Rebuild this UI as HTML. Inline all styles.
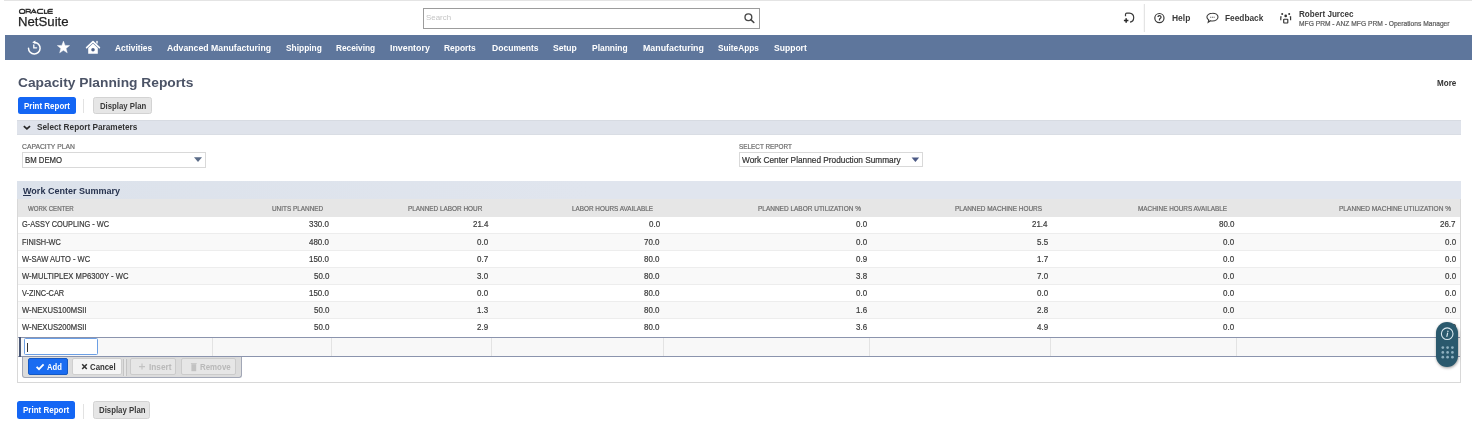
<!DOCTYPE html>
<html><head><meta charset="utf-8">
<style>
html,body{margin:0;padding:0;width:1472px;height:432px;overflow:hidden;background:#fff;position:relative;font-family:"Liberation Sans",sans-serif;}
.a{position:absolute;box-sizing:border-box;}
.t{position:absolute;white-space:nowrap;transform-origin:0 0;font-family:"Liberation Sans",sans-serif;}
.r{font-size:8.4px;line-height:8.4px;color:#3a3a3a;-webkit-text-stroke:0.2px #3a3a3a;}
svg{position:absolute;overflow:visible;}
#w{position:absolute;left:0;top:0;width:1472px;height:432px;overflow:hidden;filter:blur(0.35px);}
</style></head><body><div id="w">
<!-- top hairline -->
<div class="a" style="left:4px;top:0;width:1468px;height:1px;background:#e4e4e4"></div>

<!-- ORACLE logo -->
<svg style="left:0;top:0" width="1" height="1">
  <g fill="none" stroke="#333" stroke-width="1.2">
    <rect x="19.5" y="9.4" width="5.3" height="4" rx="2"/>
    <path d="M26.1 13.4V9.4h3.2a1.1 1.1 0 0 1 0 2.2H26.1M29.2 11.6l1.7 1.8"/>
    <path d="M31.1 13.4l2.6-4 2.6 4M32.9 12.3h1.8"/>
    <path d="M43.2 9.4h-3.7a2 2 0 0 0 0 4h3.7"/>
    <path d="M44.5 9.4v4h3"/>
    <path d="M52.8 9.4h-3a2 2 0 0 0 0 4h3M48.2 11.4h4.4"/>
  </g>
</svg>

<!-- search box -->
<div class="a" style="left:423px;top:8px;width:337px;height:21px;border:1.4px solid #9c9c9c;background:#fff"></div>
<svg style="left:0;top:0" width="1" height="1">
  <circle cx="748.4" cy="17.2" r="3.4" fill="none" stroke="#474747" stroke-width="1.35"/>
  <path d="M750.8 19.6L753.8 22.5" stroke="#474747" stroke-width="1.6" stroke-linecap="round"/>
</svg>

<!-- header right icons -->
<svg style="left:0;top:0" width="1" height="1">
  <!-- create new -->
  <path d="M1125.5 16.3V14.2Q1125.6 13.1 1126.7 13.1H1129.4Q1133.7 13.5 1133.7 17.6Q1133.7 21.8 1130 22.2" fill="none" stroke="#3a3a3a" stroke-width="1.2"/>
  <path d="M1123.9 20.5h4.5M1126.15 18.3v4.5" fill="none" stroke="#2a2a2a" stroke-width="1.5"/>
  <!-- separator -->
  <rect x="1143.8" y="4" width="1.1" height="28" fill="#e2e2e2"/>
  <!-- help -->
  <circle cx="1159.4" cy="18.1" r="4.6" fill="none" stroke="#3a3a3a" stroke-width="1.2"/>
  <path d="M1158 17.1a1.5 1.5 0 1 1 2.4 1.2c-.6.4-.9.6-.9 1.2v.9" fill="none" stroke="#3a3a3a" stroke-width="1.3"/>
  <!-- feedback -->
  <path d="M1212.4 13.2c3.1 0 5.6 1.7 5.6 3.9s-2.5 3.9-5.6 3.9c-.7 0-1.3-.1-1.9-.3l-2.3 1.6.5-2.3c-1.1-.7-1.8-1.8-1.8-2.9 0-2.2 2.4-3.9 5.5-3.9z" fill="none" stroke="#3a3a3a" stroke-width="1.1"/>
  <path d="M1210.2 17.2h4.4" stroke="#555" stroke-width="1.1" stroke-dasharray="1 0.7"/>
  <!-- people -->
  <g fill="#333">
    <circle cx="1282.2" cy="13.9" r="1"/><circle cx="1285.7" cy="15.9" r="1.35"/><circle cx="1289.2" cy="13.9" r="1"/>
  </g>
  <g fill="none" stroke="#333" stroke-width="1.15">
    <rect x="1283.7" y="19.2" width="4.1" height="3.8" rx="0.4"/>
    <path d="M1281.6 16.8h-.8v3.4M1289.8 16.8h.8v3.4"/>
  </g>
</svg>

<!-- nav bar -->
<div class="a" style="left:5px;top:35px;width:1467px;height:25px;background:#5e769c"></div>
<svg style="left:0;top:0" width="1" height="1">
  <!-- history -->
  <g fill="none" stroke="#fff" stroke-width="1.5" stroke-linecap="round">
    <path d="M34.6 42.4a5.8 5.8 0 1 1-6.1 5.8"/>
    <path d="M33.8 45v2.8h2.8" stroke-width="1.3"/>
  </g>
  <path d="M32.2 42.2l3.2-1.8v3.6z" fill="#fff"/>
  <!-- star -->
  <path d="M63.45 41.10L65.07 45.38L69.63 45.59L66.07 48.45L67.27 52.86L63.45 50.35L59.63 52.86L60.83 48.45L57.27 45.59L61.83 45.38z" fill="#fff" stroke="#fff" stroke-width="0.4" stroke-linejoin="round"/>
  <!-- home -->
  <path d="M86.6 47.6l6.4-5.9 6.4 5.9" fill="none" stroke="#fff" stroke-width="1.6" stroke-linejoin="round" stroke-linecap="round"/>
  <rect x="96.3" y="40.9" width="1.4" height="2.6" fill="#fff"/>
  <path d="M88.2 48l4.8-4.4 4.8 4.4v5.8h-9.6z" fill="#fff"/>
  <circle cx="93" cy="49.8" r="1.75" fill="#4d6089"/>
</svg>

<!-- Top buttons -->
<div class="a" style="left:18px;top:97px;width:58px;height:17px;background:#1466f4;border-radius:2.5px"></div>
<div class="a" style="left:83px;top:98.5px;width:1px;height:14.5px;background:#e2e2e2"></div>
<div class="a" style="left:93px;top:97px;width:59px;height:17px;background:#e6e6e6;border:1px solid #d3d3d3;border-radius:2.5px"></div>

<!-- section: select report parameters -->
<div class="a" style="left:17px;top:119.6px;width:1444px;height:15.8px;background:#dfe3eb;border-top:1px solid #d7dbe2;border-bottom:1px solid #d9dde4"></div>
<svg style="left:0;top:0" width="1" height="1">
  <path d="M23.8 126.2l3.1 2.7 3.1-2.7" fill="none" stroke="#262626" stroke-width="1.7"/>
</svg>

<!-- selects -->
<div class="a" style="left:22px;top:152px;width:183.5px;height:15.5px;border:1px solid #d9d9d9;background:#fff"></div>
<svg style="left:0;top:0" width="1" height="1"><path d="M194 157.3h8l-4 4.6z" fill="#5b6c88"/></svg>
<div class="a" style="left:739px;top:151.7px;width:184px;height:15.8px;border:1px solid #d9d9d9;background:#fff"></div>
<svg style="left:0;top:0" width="1" height="1"><path d="M911.6 157.6h7.6l-3.8 4.4z" fill="#4c5a86"/></svg>

<!-- work center summary container -->
<div class="a" style="left:17px;top:181px;width:1444px;height:201.6px;border:1px solid #d8d8d8;border-top:none"></div>
<div class="a" style="left:17px;top:181px;width:1444px;height:18px;background:linear-gradient(90deg,#dce2eb 0%,#e0e5ee 40%,#e0e5ee 100%)"></div>
<div class="a" style="left:22.8px;top:195.3px;width:8.6px;height:0.8px;background:#27334f"></div>
<div class="a" style="left:18px;top:199px;width:1442px;height:18px;background:#e6e6e6"></div>

<!-- rows -->
<div class="a" style="left:18px;top:217px;width:1442px;height:17px;background:#ffffff;border-bottom:1px solid #ededed"></div>
<div class="a" style="left:18px;top:234px;width:1442px;height:17px;background:#f9f9f9;border-bottom:1px solid #ededed"></div>
<div class="a" style="left:18px;top:251px;width:1442px;height:17px;background:#ffffff;border-bottom:1px solid #ededed"></div>
<div class="a" style="left:18px;top:268px;width:1442px;height:17.3px;background:#f9f9f9;border-bottom:1px solid #ededed"></div>
<div class="a" style="left:18px;top:285.3px;width:1442px;height:17px;background:#ffffff;border-bottom:1px solid #ededed"></div>
<div class="a" style="left:18px;top:302.3px;width:1442px;height:17px;background:#f9f9f9;border-bottom:1px solid #ededed"></div>
<div class="a" style="left:18px;top:319.3px;width:1442px;height:17px;background:#ffffff"></div>

<!-- edit row -->
<div class="a" style="left:18px;top:336.6px;width:1442px;height:20.2px;background:#f8f8f8;border-top:1px solid #8b94ad;border-bottom:1px solid #8b94ad"></div>
<div class="a" style="left:18.8px;top:336.6px;width:2.6px;height:20.2px;background:#4a5876"></div>
<div class="a" style="left:212.4px;top:337.6px;width:1px;height:18.2px;background:#e3e3e3"></div>
<div class="a" style="left:331px;top:337.6px;width:1px;height:18.2px;background:#e3e3e3"></div>
<div class="a" style="left:490.6px;top:337.6px;width:1px;height:18.2px;background:#e3e3e3"></div>
<div class="a" style="left:663.2px;top:337.6px;width:1px;height:18.2px;background:#e3e3e3"></div>
<div class="a" style="left:869.3px;top:337.6px;width:1px;height:18.2px;background:#e3e3e3"></div>
<div class="a" style="left:1050px;top:337.6px;width:1px;height:18.2px;background:#e3e3e3"></div>
<div class="a" style="left:1236px;top:337.6px;width:1px;height:18.2px;background:#e3e3e3"></div>
<div class="a" style="left:24px;top:338.2px;width:74px;height:16.8px;background:#fff;border:1.5px solid #6c9fe4;border-radius:1.5px"></div>
<div class="a" style="left:26.6px;top:342.6px;width:1px;height:9px;background:#333"></div>

<!-- toolbar -->
<div class="a" style="left:21.8px;top:356.6px;width:220.4px;height:21.4px;background:#dcdcdc;border:1.3px solid #a2a7b6;border-top:none;border-radius:0 0 3px 3px"></div>
<div class="a" style="left:28px;top:358.4px;width:39.6px;height:16.8px;background:#1a6cf1;border:1px solid #1558c2;border-radius:2px"></div>
<svg style="left:0;top:0" width="1" height="1"><path d="M36.6 366.8l2.4 2.4 4.6-4.8" fill="none" stroke="#fff" stroke-width="1.8"/></svg>
<div class="a" style="left:72px;top:358.4px;width:49.6px;height:16.8px;background:#f5f5f5;border:1px solid #cfcfcf;border-radius:2px"></div>
<svg style="left:0;top:0" width="1" height="1"><path d="M82.2 364.3l4.6 4.8M86.8 364.3l-4.6 4.8" fill="none" stroke="#333" stroke-width="1.5"/></svg>
<div class="a" style="left:123.4px;top:358.6px;width:4px;height:17px;background:#e4e4e4;border-left:1px solid #c4c4c4;border-right:1px solid #c4c4c4"></div>
<div class="a" style="left:129.8px;top:358.4px;width:46.4px;height:16.8px;background:#e6e6e6;border:1px solid #cbcbcb;border-radius:2px"></div>
<svg style="left:0;top:0" width="1" height="1"><path d="M139 366.6h6M142 363.6v6" fill="none" stroke="#c2c2c2" stroke-width="1.1"/></svg>
<div class="a" style="left:181px;top:358.4px;width:54.8px;height:16.8px;background:#e6e6e6;border:1px solid #cbcbcb;border-radius:2px"></div>
<svg style="left:0;top:0" width="1" height="1"><rect x="191.4" y="364.2" width="4.8" height="7" fill="#c2c2c2"/><rect x="190.9" y="363.2" width="5.8" height="0.9" fill="#c2c2c2"/></svg>

<!-- floating widget -->
<div class="a" style="left:1436px;top:322.4px;width:22.4px;height:44.2px;background:#2a596d;border-radius:11.2px;box-shadow:0.5px 1px 3px rgba(0,0,0,0.4);z-index:5"></div>
<svg style="left:0;top:0;z-index:6" width="1" height="1">
  <circle cx="1447.2" cy="333.7" r="5.8" fill="none" stroke="#d9e7ee" stroke-width="1.1"/>
  <path d="M1447.9 331.2v.2" fill="none" stroke="#d9e7ee" stroke-width="1.3" stroke-linecap="round"/>
  <path d="M1447.6 333.2l-.7 3.2" fill="none" stroke="#d9e7ee" stroke-width="1.2" stroke-linecap="round"/>
  <g fill="#8fb0bf">
    <circle cx="1442.8" cy="347.6" r="1.35"/><circle cx="1447.6" cy="347.6" r="1.35"/><circle cx="1452.4" cy="347.6" r="1.35"/>
    <circle cx="1442.8" cy="352.4" r="1.35"/><circle cx="1447.6" cy="352.4" r="1.35"/><circle cx="1452.4" cy="352.4" r="1.35"/>
    <circle cx="1442.8" cy="357.2" r="1.35"/><circle cx="1447.6" cy="357.2" r="1.35"/><circle cx="1452.4" cy="357.2" r="1.35"/>
  </g>
</svg>

<!-- bottom buttons -->
<div class="a" style="left:17.2px;top:401.2px;width:57.8px;height:17.6px;background:#1466f4;border-radius:2.5px"></div>
<div class="a" style="left:83px;top:404px;width:1px;height:14.5px;background:#e2e2e2"></div>
<div class="a" style="left:93.2px;top:401.2px;width:57.2px;height:17.6px;background:#e6e6e6;border:1px solid #d3d3d3;border-radius:2.5px"></div>

<span id="i0" class="t" style="left:17.63px;top:15.09px;font-size:13.6px;line-height:13.6px;font-weight:normal;color:#1f1f1f;transform:scaleX(0.9708);-webkit-text-stroke:0.25px #1f1f1f">NetSuite</span>
<span id="i1" class="t" style="left:426.10px;top:14.17px;font-size:7.6px;line-height:7.6px;font-weight:normal;color:#c4c4c4;transform:scaleX(1.0404);">Search</span>
<span id="i2" class="t" style="left:1171.50px;top:15.30px;font-size:8.2px;line-height:8.2px;font-weight:bold;color:#3a3a3a;transform:scaleX(1.0315);">Help</span>
<span id="i3" class="t" style="left:1224.80px;top:15.30px;font-size:8.2px;line-height:8.2px;font-weight:bold;color:#3a3a3a;transform:scaleX(1.0152);">Feedback</span>
<span id="i4" class="t" style="left:1298.60px;top:10.54px;font-size:8.2px;line-height:8.2px;font-weight:bold;color:#3a3a3a;transform:scaleX(0.9909);">Robert Jurcec</span>
<span id="i5" class="t" style="left:1298.60px;top:20.96px;font-size:6.9px;line-height:6.9px;font-weight:normal;color:#5a5a5a;transform:scaleX(0.9685);-webkit-text-stroke:0.2px #5a5a5a;">MFG PRM - ANZ MFG PRM - Operations Manager</span>
<span id="i6" class="t" style="left:114.70px;top:43.12px;font-size:9.9px;line-height:9.9px;font-weight:bold;color:#ffffff;transform:scaleX(0.8443);">Activities</span>
<span id="i7" class="t" style="left:166.90px;top:43.12px;font-size:9.9px;line-height:9.9px;font-weight:bold;color:#ffffff;transform:scaleX(0.8819);">Advanced Manufacturing</span>
<span id="i8" class="t" style="left:285.60px;top:43.12px;font-size:9.9px;line-height:9.9px;font-weight:bold;color:#ffffff;transform:scaleX(0.8483);">Shipping</span>
<span id="i9" class="t" style="left:336.00px;top:43.12px;font-size:9.9px;line-height:9.9px;font-weight:bold;color:#ffffff;transform:scaleX(0.8387);">Receiving</span>
<span id="i10" class="t" style="left:389.80px;top:43.12px;font-size:9.9px;line-height:9.9px;font-weight:bold;color:#ffffff;transform:scaleX(0.8964);">Inventory</span>
<span id="i11" class="t" style="left:444.14px;top:43.12px;font-size:9.9px;line-height:9.9px;font-weight:bold;color:#ffffff;transform:scaleX(0.8514);">Reports</span>
<span id="i12" class="t" style="left:491.50px;top:43.12px;font-size:9.9px;line-height:9.9px;font-weight:bold;color:#ffffff;transform:scaleX(0.8659);">Documents</span>
<span id="i13" class="t" style="left:553.30px;top:43.12px;font-size:9.9px;line-height:9.9px;font-weight:bold;color:#ffffff;transform:scaleX(0.8686);">Setup</span>
<span id="i14" class="t" style="left:592.30px;top:43.12px;font-size:9.9px;line-height:9.9px;font-weight:bold;color:#ffffff;transform:scaleX(0.8545);">Planning</span>
<span id="i15" class="t" style="left:642.70px;top:43.12px;font-size:9.9px;line-height:9.9px;font-weight:bold;color:#ffffff;transform:scaleX(0.8957);">Manufacturing</span>
<span id="i16" class="t" style="left:718.40px;top:43.12px;font-size:9.9px;line-height:9.9px;font-weight:bold;color:#ffffff;transform:scaleX(0.8371);">SuiteApps</span>
<span id="i17" class="t" style="left:774.40px;top:43.12px;font-size:9.9px;line-height:9.9px;font-weight:bold;color:#ffffff;transform:scaleX(0.8662);">Support</span>
<span id="i18" class="t" style="left:17.90px;top:75.89px;font-size:13.6px;line-height:13.6px;font-weight:bold;color:#4b5366;transform:scaleX(1.0138);">Capacity Planning Reports</span>
<span id="i19" class="t" style="left:1436.50px;top:78.69px;font-size:8.4px;line-height:8.4px;font-weight:bold;color:#333333;transform:scaleX(0.9631);">More</span>
<span id="i20" class="t" style="left:23.60px;top:101.59px;font-size:8.4px;line-height:8.4px;font-weight:bold;color:#ffffff;transform:scaleX(0.9506);">Print Report</span>
<span id="i21" class="t" style="left:99.70px;top:101.59px;font-size:8.4px;line-height:8.4px;font-weight:bold;color:#3a3a3a;transform:scaleX(0.9298);">Display Plan</span>
<span id="i22" class="t" style="left:36.70px;top:123.37px;font-size:8.3px;line-height:8.3px;font-weight:bold;color:#333333;transform:scaleX(0.9943);">Select Report Parameters</span>
<span id="i23" class="t" style="left:22.10px;top:143.17px;font-size:7.0px;line-height:7.0px;font-weight:normal;color:#6a6a6a;transform:scaleX(0.9677);-webkit-text-stroke:0.2px #6a6a6a;">CAPACITY PLAN</span>
<span id="i24" class="t" style="left:24.60px;top:155.99px;font-size:8.4px;line-height:8.4px;font-weight:normal;color:#333333;transform:scaleX(0.9259);-webkit-text-stroke:0.2px #333333;">BM DEMO</span>
<span id="i25" class="t" style="left:739.20px;top:143.17px;font-size:7.0px;line-height:7.0px;font-weight:normal;color:#6a6a6a;transform:scaleX(0.9094);-webkit-text-stroke:0.2px #6a6a6a;">SELECT REPORT</span>
<span id="i26" class="t" style="left:741.50px;top:155.89px;font-size:8.4px;line-height:8.4px;font-weight:normal;color:#333333;transform:scaleX(0.9885);-webkit-text-stroke:0.2px #333333;">Work Center Planned Production Summary</span>
<span id="i27" class="t" style="left:22.80px;top:186.77px;font-size:8.9px;line-height:8.9px;font-weight:bold;color:#27334f;transform:scaleX(1.0169);">Work Center Summary</span>
<span id="i28" class="t" style="left:27.80px;top:205.66px;font-size:6.9px;line-height:6.9px;font-weight:normal;color:#6b6b6b;transform:scaleX(0.8858);-webkit-text-stroke:0.2px #6b6b6b;">WORK CENTER</span>
<span id="i29" class="t" style="left:271.70px;top:205.66px;font-size:6.9px;line-height:6.9px;font-weight:normal;color:#6b6b6b;transform:scaleX(0.9282);-webkit-text-stroke:0.2px #6b6b6b;">UNITS PLANNED</span>
<span id="i30" class="t" style="left:407.90px;top:205.66px;font-size:6.9px;line-height:6.9px;font-weight:normal;color:#6b6b6b;transform:scaleX(0.9282);-webkit-text-stroke:0.2px #6b6b6b;">PLANNED LABOR HOUR</span>
<span id="i31" class="t" style="left:571.80px;top:205.66px;font-size:6.9px;line-height:6.9px;font-weight:normal;color:#6b6b6b;transform:scaleX(0.9232);-webkit-text-stroke:0.2px #6b6b6b;">LABOR HOURS AVAILABLE</span>
<span id="i32" class="t" style="left:758.02px;top:205.66px;font-size:6.9px;line-height:6.9px;font-weight:normal;color:#6b6b6b;transform:scaleX(0.9410);-webkit-text-stroke:0.2px #6b6b6b;">PLANNED LABOR UTILIZATION %</span>
<span id="i33" class="t" style="left:954.80px;top:205.66px;font-size:6.9px;line-height:6.9px;font-weight:normal;color:#6b6b6b;transform:scaleX(0.9353);-webkit-text-stroke:0.2px #6b6b6b;">PLANNED MACHINE HOURS</span>
<span id="i34" class="t" style="left:1137.90px;top:205.66px;font-size:6.9px;line-height:6.9px;font-weight:normal;color:#6b6b6b;transform:scaleX(0.9245);-webkit-text-stroke:0.2px #6b6b6b;">MACHINE HOURS AVAILABLE</span>
<span id="i35" class="t" style="left:1338.80px;top:205.66px;font-size:6.9px;line-height:6.9px;font-weight:normal;color:#6b6b6b;transform:scaleX(0.9518);-webkit-text-stroke:0.2px #6b6b6b;">PLANNED MACHINE UTILIZATION %</span>
<span id="i36" class="t" style="left:47.10px;top:362.69px;font-size:8.4px;line-height:8.4px;font-weight:bold;color:#ffffff;transform:scaleX(0.9094);">Add</span>
<span id="i37" class="t" style="left:90.00px;top:362.69px;font-size:8.4px;line-height:8.4px;font-weight:bold;color:#333333;transform:scaleX(0.9323);">Cancel</span>
<span id="i38" class="t" style="left:148.50px;top:362.69px;font-size:8.4px;line-height:8.4px;font-weight:bold;color:#b9b9b9;transform:scaleX(0.9906);">Insert</span>
<span id="i39" class="t" style="left:199.90px;top:362.69px;font-size:8.4px;line-height:8.4px;font-weight:bold;color:#b9b9b9;transform:scaleX(0.9415);">Remove</span>
<span id="i40" class="t" style="left:22.80px;top:405.69px;font-size:8.4px;line-height:8.4px;font-weight:bold;color:#ffffff;transform:scaleX(0.9547);">Print Report</span>
<span id="i41" class="t" style="left:98.90px;top:405.69px;font-size:8.4px;line-height:8.4px;font-weight:bold;color:#3a3a3a;transform:scaleX(0.9338);">Display Plan</span>
<span class="t r" style="left:21.80px;top:220.39px;transform:scaleX(0.8792)">G-ASSY COUPLING - WC</span>
<span class="t r" style="left:309.16px;top:220.39px;transform:scaleX(0.9500)">330.0</span>
<span class="t r" style="left:472.59px;top:220.39px;transform:scaleX(0.9500)">21.4</span>
<span class="t r" style="left:648.61px;top:220.39px;transform:scaleX(0.9500)">0.0</span>
<span class="t r" style="left:855.81px;top:220.39px;transform:scaleX(0.9500)">0.0</span>
<span class="t r" style="left:1032.49px;top:220.39px;transform:scaleX(0.9500)">21.4</span>
<span class="t r" style="left:1218.59px;top:220.39px;transform:scaleX(0.9500)">80.0</span>
<span class="t r" style="left:1440.49px;top:220.39px;transform:scaleX(0.9500)">26.7</span>
<span class="t r" style="left:21.80px;top:237.54px;transform:scaleX(0.8789)">FINISH-WC</span>
<span class="t r" style="left:309.16px;top:237.54px;transform:scaleX(0.9500)">480.0</span>
<span class="t r" style="left:477.01px;top:237.54px;transform:scaleX(0.9500)">0.0</span>
<span class="t r" style="left:644.19px;top:237.54px;transform:scaleX(0.9500)">70.0</span>
<span class="t r" style="left:855.81px;top:237.54px;transform:scaleX(0.9500)">0.0</span>
<span class="t r" style="left:1036.91px;top:237.54px;transform:scaleX(0.9500)">5.5</span>
<span class="t r" style="left:1223.01px;top:237.54px;transform:scaleX(0.9500)">0.0</span>
<span class="t r" style="left:1444.91px;top:237.54px;transform:scaleX(0.9500)">0.0</span>
<span class="t r" style="left:21.80px;top:254.69px;transform:scaleX(0.9002)">W-SAW AUTO - WC</span>
<span class="t r" style="left:309.16px;top:254.69px;transform:scaleX(0.9500)">150.0</span>
<span class="t r" style="left:477.01px;top:254.69px;transform:scaleX(0.9500)">0.7</span>
<span class="t r" style="left:644.19px;top:254.69px;transform:scaleX(0.9500)">80.0</span>
<span class="t r" style="left:855.81px;top:254.69px;transform:scaleX(0.9500)">0.9</span>
<span class="t r" style="left:1036.91px;top:254.69px;transform:scaleX(0.9500)">1.7</span>
<span class="t r" style="left:1223.01px;top:254.69px;transform:scaleX(0.9500)">0.0</span>
<span class="t r" style="left:1444.91px;top:254.69px;transform:scaleX(0.9500)">0.0</span>
<span class="t r" style="left:21.80px;top:271.84px;transform:scaleX(0.9109)">W-MULTIPLEX MP6300Y - WC</span>
<span class="t r" style="left:313.59px;top:271.84px;transform:scaleX(0.9500)">50.0</span>
<span class="t r" style="left:477.01px;top:271.84px;transform:scaleX(0.9500)">3.0</span>
<span class="t r" style="left:644.19px;top:271.84px;transform:scaleX(0.9500)">80.0</span>
<span class="t r" style="left:855.81px;top:271.84px;transform:scaleX(0.9500)">3.8</span>
<span class="t r" style="left:1036.91px;top:271.84px;transform:scaleX(0.9500)">7.0</span>
<span class="t r" style="left:1223.01px;top:271.84px;transform:scaleX(0.9500)">0.0</span>
<span class="t r" style="left:1444.91px;top:271.84px;transform:scaleX(0.9500)">0.0</span>
<span class="t r" style="left:21.80px;top:288.99px;transform:scaleX(0.8794)">V-ZINC-CAR</span>
<span class="t r" style="left:309.16px;top:288.99px;transform:scaleX(0.9500)">150.0</span>
<span class="t r" style="left:477.01px;top:288.99px;transform:scaleX(0.9500)">0.0</span>
<span class="t r" style="left:644.19px;top:288.99px;transform:scaleX(0.9500)">80.0</span>
<span class="t r" style="left:855.81px;top:288.99px;transform:scaleX(0.9500)">0.0</span>
<span class="t r" style="left:1036.91px;top:288.99px;transform:scaleX(0.9500)">0.0</span>
<span class="t r" style="left:1223.01px;top:288.99px;transform:scaleX(0.9500)">0.0</span>
<span class="t r" style="left:1444.91px;top:288.99px;transform:scaleX(0.9500)">0.0</span>
<span class="t r" style="left:21.80px;top:306.14px;transform:scaleX(0.9152)">W-NEXUS100MSII</span>
<span class="t r" style="left:313.59px;top:306.14px;transform:scaleX(0.9500)">50.0</span>
<span class="t r" style="left:477.01px;top:306.14px;transform:scaleX(0.9500)">1.3</span>
<span class="t r" style="left:644.19px;top:306.14px;transform:scaleX(0.9500)">80.0</span>
<span class="t r" style="left:855.81px;top:306.14px;transform:scaleX(0.9500)">1.6</span>
<span class="t r" style="left:1036.91px;top:306.14px;transform:scaleX(0.9500)">2.8</span>
<span class="t r" style="left:1223.01px;top:306.14px;transform:scaleX(0.9500)">0.0</span>
<span class="t r" style="left:1444.91px;top:306.14px;transform:scaleX(0.9500)">0.0</span>
<span class="t r" style="left:21.80px;top:323.29px;transform:scaleX(0.9152)">W-NEXUS200MSII</span>
<span class="t r" style="left:313.59px;top:323.29px;transform:scaleX(0.9500)">50.0</span>
<span class="t r" style="left:477.01px;top:323.29px;transform:scaleX(0.9500)">2.9</span>
<span class="t r" style="left:644.19px;top:323.29px;transform:scaleX(0.9500)">80.0</span>
<span class="t r" style="left:855.81px;top:323.29px;transform:scaleX(0.9500)">3.6</span>
<span class="t r" style="left:1036.91px;top:323.29px;transform:scaleX(0.9500)">4.9</span>
<span class="t r" style="left:1223.01px;top:323.29px;transform:scaleX(0.9500)">0.0</span>
<span class="t r" style="left:1444.91px;top:323.29px;transform:scaleX(0.9500)">0.0</span>
</div></body></html>
